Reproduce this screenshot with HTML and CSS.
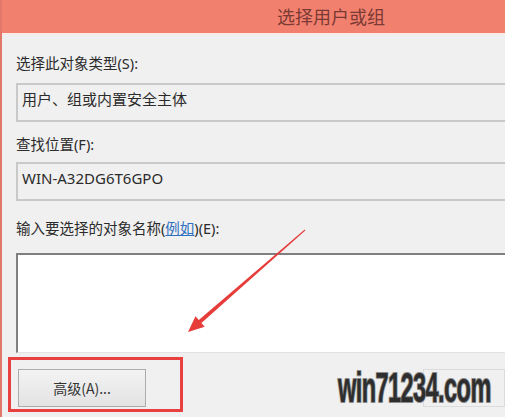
FILE: index.html
```html
<!DOCTYPE html>
<html lang="zh-CN">

<head>
  <meta charset="UTF-8" />
  <meta name="viewport" content="width=device-width, initial-scale=1.0" />
  <title>选择用户或组</title>
  <link rel="stylesheet" href="styles.css">
</head>

<body>
  <div class="window">
    <div class="titlebar">选择用户或组</div>

    <div class="content">
      <div class="label label-first">选择此对象类型(S):</div>
      <div class="field">用户、组或内置安全主体</div>

      <div class="label">查找位置(F):</div>
      <div class="field">WIN-A32DG6T6GPO</div>

      <div class="label label-names">输入要选择的对象名称(<a class="link">例如</a>)(E):</div>
      <div class="names-box"></div>
    </div>

    <div class="footer">
      <button class="btn">高级(A)...</button>
      <button class="btn btn-right"></button>
    </div>

    <!-- annotations -->
    <div class="highlight"></div>
    <svg class="arrow" width="505" height="417" viewBox="0 0 505 417">
      <polygon fill="#e63c3a"
        points="305.3,230.4 201.4,323 204.7,326.8 188,332 195.5,316.2 198.8,320 304.7,229.6" />
    </svg>
    <div class="watermark">win71234.com</div>
  </div>
</body>

</html>
```

FILE: styles.css
```css
body {
  margin: 0;
  font-family: "Noto Sans", "Noto Sans CJK SC", sans-serif;
  color: #2b2b2b;
}

.window {
  position: relative;
  width: 505px;
  height: 417px;
  overflow: hidden;
  background: #f0f0f0;
  border-left: 2px solid #e2786a;
  box-sizing: border-box;
}

.titlebar {
  height: 33px;
  line-height: 32px;
  padding-left: 275px;
  background: #f2806f;
  color: #7b3a33;
  font-family: "Noto Sans CJK SC", sans-serif;
  font-size: 18px;
  border-bottom: 2px solid #f7ece9;
}

.content {
  padding-left: 14px;
}

.label {
  font-size: 14.5px;
  line-height: 20px;
  margin: 12px 0 8px;
}

.label-first {
  margin: 18px 0 10px;
}

.label-names {
  margin: 17px 0 15px;
}

.link {
  color: #2f6fc0;
  text-decoration: underline;
}

.field {
  height: 39px;
  box-sizing: border-box;
  border: 2px solid #c9c9c9;
  border-right: none;
  padding: 4px 0 0 4px;
  font-size: 15px;
  line-height: 20px;
}

.names-box {
  height: 100px;
  box-sizing: border-box;
  background: #fff;
  border-top: 2px solid #7f7f7f;
  border-left: 2px solid #7f7f7f;
  border-bottom: 1px solid #e3e3e3;
}

.footer {
  display: flex;
  justify-content: space-between;
  padding: 16px 0 0 16px;
}

.btn {
  width: 128px;
  height: 38px;
  border: 1px solid #acacac;
  background: linear-gradient(#f3f3f3, #e3e3e3);
  font-family: "Noto Sans CJK SC", sans-serif;
  font-size: 14px;
  color: #333;
}

.btn-right {
  width: 82px;
  border-color: #dcdcdc;
  background: #f0f0f0;
}

.highlight {
  position: absolute;
  left: 6px;
  top: 357px;
  width: 175px;
  height: 55px;
  box-sizing: border-box;
  border: 3px solid #e8403e;
}

.arrow {
  position: absolute;
  left: -2px;
  top: 0;
  pointer-events: none;
}

.watermark {
  position: absolute;
  left: 336px;
  top: 365px;
  font-family: "Liberation Sans", "DejaVu Sans", sans-serif;
  font-weight: bold;
  font-size: 42px;
  line-height: 46px;
  letter-spacing: -1px;
  color: #2e2e2e;
  -webkit-text-stroke: 2px #8a8a8a;
  paint-order: stroke fill;
  text-shadow: 0 0 2px #9a9a9a;
  transform: scaleX(0.56);
  transform-origin: left top;
  white-space: nowrap;
}
```
